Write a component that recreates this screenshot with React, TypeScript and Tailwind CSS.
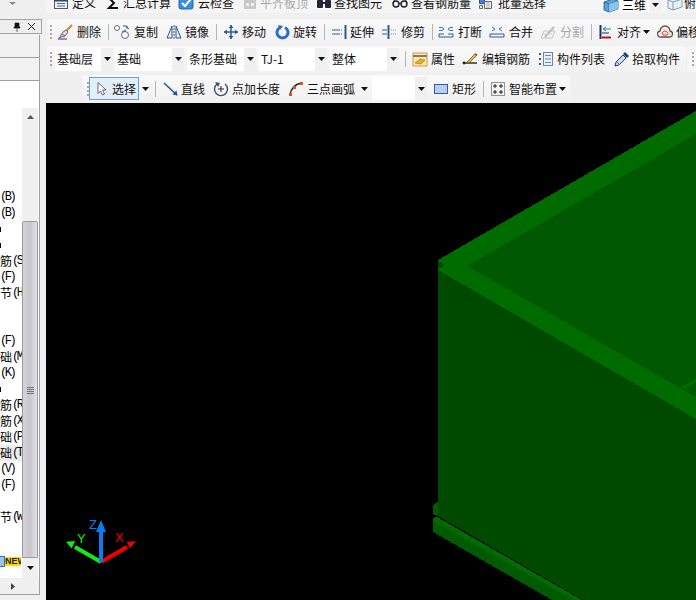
import type { ReactNode } from 'react';

const cjk = { fontFamily: '"Noto Sans CJK SC", "Liberation Sans", sans-serif' };

function Icon({ children, w = 16 }: { children: ReactNode; w?: number }) {
  return (
    <svg width={w} height="16" viewBox={`0 0 ${w} 16`} fill="none" className="shrink-0 block">
      {children}
    </svg>
  );
}

const icons: Record<string, ReactNode> = {
  define: (
    <Icon>
      <rect x="1.5" y="2.5" width="13" height="11" fill="#eef2f8" stroke="#4a5a70" />
      <path d="M1 5.5h14" stroke="#30466a" strokeWidth="2" />
      <path d="M4 8.5h8M4 11h8" stroke="#667" />
    </Icon>
  ),
  sigma: (
    <Icon>
      <path d="M12 3H3l5 5-5 5h9" stroke="#111" strokeWidth="2" />
    </Icon>
  ),
  cloud: (
    <Icon>
      <rect x="1" y="2" width="14" height="12" rx="2" fill="#3b8fd8" stroke="#1b6ab0" />
      <path d="M4 8l3 3 6-7" stroke="#fff" strokeWidth="2" />
    </Icon>
  ),
  flush: (
    <Icon>
      <path d="M2 5h12v9H2z" fill="#c8c8c8" />
      <path d="M4 2h8v3H4z" fill="#dedede" />
      <path d="M4 8h3v3H4zM9 8h3v3H9z" fill="#f0f0f0" />
    </Icon>
  ),
  find: (
    <Icon>
      <rect x="1" y="5" width="6" height="8" rx="1" fill="#223" />
      <rect x="9" y="5" width="6" height="8" rx="1" fill="#223" />
      <path d="M3 2h3v3H3zM10 2h3v3h-3z" fill="#446" />
      <path d="M7 8h2" stroke="#223" strokeWidth="2" />
    </Icon>
  ),
  glasses: (
    <Icon>
      <circle cx="4" cy="9" r="3" stroke="#222" strokeWidth="1.4" fill="#eef" />
      <circle cx="12" cy="9" r="3" stroke="#222" strokeWidth="1.4" fill="#eef" />
      <path d="M7 8.5h2M1 8l2-4M15 8l-2-4" stroke="#222" />
    </Icon>
  ),
  batch: (
    <Icon>
      <path d="M1.5 3.5h5v5h-5z" fill="#4f7fd0" stroke="#2a4f90" />
      <path d="M6.5 6.5h7v7h-7zM1.5 10.5h3v3h-3z" fill="#f4f4f8" stroke="#666" />
      <path d="M8 8h4M8 10h4M8 12h4" stroke="#aab" />
    </Icon>
  ),
  box: (
    <Icon>
      <path d="M1 5l9-3 5 2v8l-9 3-5-2z" fill="#5ea3d6" stroke="#2d6fa5" />
      <path d="M6 7l9-3M6 7v8M6 7L1 5" stroke="#2d6fa5" />
      <path d="M6 7l9-3v8l-9 3z" fill="#8fc4e8" />
    </Icon>
  ),
  top: (
    <Icon>
      <path d="M1 5l9-3 5 2v8l-9 3-5-2z" fill="#e8f0f4" stroke="#7fa0b0" />
      <path d="M6 7l9-3M6 7v8M6 7L1 5" stroke="#7fa0b0" />
    </Icon>
  ),
  erase: (
    <Icon>
      <path d="M15 1L8 8" stroke="#c98a2a" strokeWidth="2" />
      <path d="M9 6l2 2-3 4-4 1-2 1c2-2 2-4 4-6z" fill="#e8e4f0" stroke="#5a5a80" />
      <path d="M1 15h9" stroke="#303060" />
      <path d="M5 10l3 2" stroke="#d03030" />
    </Icon>
  ),
  copy: (
    <Icon w={18}>
      <circle cx="4" cy="4" r="2.5" stroke="#667" fill="#fff" />
      <circle cx="12" cy="11" r="3.5" stroke="#667" fill="#fff" />
      <path d="M9 8l4-2M13 2l3 3" stroke="#2a5aa8" />
      <path d="M10 2h4v3" stroke="#2a5aa8" />
    </Icon>
  ),
  mirror: (
    <Icon>
      <path d="M6 2v12H1z" fill="#e8eef8" stroke="#33508a" />
      <path d="M10 2v12h5z" fill="#e8eef8" stroke="#33508a" />
      <path d="M8 1v14" stroke="#33508a" strokeDasharray="2 1" />
    </Icon>
  ),
  move: (
    <Icon>
      <path d="M8 1v14M1 8h14" stroke="#2c5a96" strokeWidth="1.5" />
      <path d="M8 1l-2.5 3h5zM8 15l-2.5-3h5zM1 8l3-2.5v5zM15 8l-3-2.5v5z" fill="#2c5a96" />
    </Icon>
  ),
  rotate: (
    <Icon>
      <path d="M5 3.5a5.5 5.5 0 1 0 5 0" stroke="#2a6ccc" strokeWidth="3" />
      <path d="M3 1l5 1-3 4z" fill="#2a6ccc" />
    </Icon>
  ),
  extend: (
    <Icon>
      <path d="M1 6h8M1 10h8" stroke="#2c5a96" />
      <path d="M10 6h1M12 6h0M10 10h1" stroke="#2c5a96" strokeDasharray="1 1" />
      <path d="M14.5 1v14" stroke="#2c5a96" strokeWidth="2" />
    </Icon>
  ),
  trim: (
    <Icon>
      <path d="M0 6h5M0 10h5" stroke="#2c5a96" />
      <path d="M9 6h5M9 10h5" stroke="#889" strokeDasharray="1 1" />
      <path d="M6.5 1v14" stroke="#2c5a96" strokeWidth="2" />
    </Icon>
  ),
  split: (
    <Icon>
      <path d="M1 10h5M10 10h5M1 13h14" stroke="#2c5a96" />
      <path d="M1 3.5h3l2 1.5-2 1.5H1M15 3.5h-3l-2 1.5 2 1.5h3" stroke="#2c7ad0" />
      <path d="M1 10v3M15 10v3" stroke="#2c5a96" />
    </Icon>
  ),
  merge: (
    <Icon>
      <path d="M1 10h14M1 13h14M1 10v3M15 10v3" stroke="#2c5a96" />
      <path d="M3 3l3 2-3 2M13 3l-3 2 3 2" stroke="#2c7ad0" />
    </Icon>
  ),
  cut: (
    <Icon>
      <path d="M1 14l3-7h11l-3 7z" stroke="#c4c4c4" />
      <path d="M5 13l9-10" stroke="#bcbcbc" strokeWidth="2" />
      <path d="M2 10h10" stroke="#d4d4d4" />
    </Icon>
  ),
  align: (
    <Icon>
      <path d="M2.5 1v14" stroke="#1b2f6b" strokeWidth="2" />
      <path d="M4 13.5h9" stroke="#b01818" strokeWidth="2" />
      <path d="M5 5h8M5 5l3-2M5 5l3 2" stroke="#2c7ad0" />
      <path d="M4 9h7" stroke="#1b2f6b" />
    </Icon>
  ),
  offset: (
    <Icon>
      <path d="M4 13a3 3 0 0 1-1-6 5 5 0 0 1 10 0 3 3 0 0 1-1 6z" stroke="#555" strokeWidth="1.3" fill="#f8e8e0" />
      <path d="M6 11a2 2 0 0 1 0-3 2.500 2.500 0 0 1 4 0 2 2 0 0 1 0 3z" stroke="#d84030" />
    </Icon>
  ),
  attr: (
    <Icon>
      <rect x="1" y="2" width="14" height="13" fill="#f6e6b8" stroke="#d89a4a" />
      <path d="M1 5h14" stroke="#8a7a60" strokeWidth="2" />
      <path d="M3 12l5-4 5 1-4 4z" fill="#e0b020" stroke="#a07810" strokeWidth="0.6" />
    </Icon>
  ),
  rebar: (
    <Icon>
      <path d="M1 12h14" stroke="#222" strokeWidth="1.4" />
      <path d="M5 11l8-8 2 1-8 8z" fill="#e8c040" stroke="#604010" strokeWidth="0.7" />
      <path d="M13 3l2 1" stroke="#d03030" strokeWidth="1.5" />
      <circle cx="2" cy="12" r="1.400" fill="#222" />
    </Icon>
  ),
  list: (
    <Icon>
      <path d="M1 2h2v2H1zM1 7h2v2H1zM1 12h2v2H1z" fill="#556" />
      <rect x="5.500" y="1.500" width="9" height="13" fill="#eaf2fb" stroke="#6a87a8" />
      <path d="M7 4.500h6M7 8h6M7 11.500h6" stroke="#6a87a8" />
    </Icon>
  ),
  pick: (
    <Icon>
      <path d="M1 15l1-4 7-7 3 3-7 7z" fill="#c8def4" stroke="#1d3f7a" />
      <path d="M9 3l2-2 4 4-2 2z" fill="#1d3f7a" />
      <path d="M3 11l3 3" stroke="#d03030" />
    </Icon>
  ),
  cursor: (
    <Icon>
      <path d="M3 1.500v11l2.500-2.500 2 4 2-1-2-4H11z" fill="#fff" stroke="#667" />
    </Icon>
  ),
  line: (
    <Icon>
      <path d="M1 2l13 12" stroke="#23528f" strokeWidth="1.5" />
      <path d="M14.500 14.500l-1-5-4 4z" fill="#23528f" />
    </Icon>
  ),
  lengthen: (
    <Icon>
      <path d="M4 3a6.500 6.500 0 1 0 8 0" stroke="#3a4a70" strokeWidth="1.400" />
      <path d="M2 1l5 1-2 4z" fill="#3a4a70" />
      <path d="M8 5v6M5 8h6" stroke="#222" />
    </Icon>
  ),
  arc: (
    <Icon>
      <path d="M2 14C3 7 7 3 14 2" stroke="#222" strokeWidth="1.300" />
      <rect x="1" y="12" width="3" height="3" fill="#d85030" />
      <rect x="5" y="5" width="3" height="3" fill="#d85030" />
      <rect x="12" y="1" width="3" height="3" fill="#d85030" />
    </Icon>
  ),
  rect: (
    <Icon>
      <rect x="1.500" y="3.500" width="13" height="9" fill="#b8cef0" stroke="#3858a8" />
    </Icon>
  ),
  smart: (
    <Icon>
      <rect x="1.500" y="1.500" width="13" height="13" fill="#f4f4f4" stroke="#333" strokeDasharray="1 1" />
      <path d="M5 3v4M3 5h4M11 3v4M9 5h4M5 9v4M3 11h4M11 9v4M9 11h4" stroke="#222" />
    </Icon>
  ),
};

function Caret({ className = '' }: { className?: string }) {
  return (
    <svg width="7" height="4" viewBox="0 0 7 4" className={`shrink-0 block ${className}`}>
      <path d="M0 0h7L3.500 4z" fill="#111" />
    </svg>
  );
}

function Tool({
  icon,
  label,
  width,
  slot = 'w-[20px]',
  muted,
  children,
}: {
  icon: string;
  label: string;
  width: string;
  slot?: string;
  muted?: boolean;
  children?: ReactNode;
}) {
  return (
    <div className={`flex items-center shrink-0 ${width}`}>
      <span className={`shrink-0 ${slot}`}>{icons[icon]}</span>
      <span className={`whitespace-nowrap ${muted ? 'text-[#a8a8a8]' : 'text-[#111]'}`}>{label}</span>
      {children}
    </div>
  );
}

function Sep({ width }: { width: string }) {
  return (
    <div className={`h-[16px] shrink-0 ${width}`}>
      <div className="w-px h-full bg-[#b4b4b4]" />
    </div>
  );
}

function Grip({ className = '' }: { className?: string }) {
  return (
    <div className={`flex flex-col gap-[2px] shrink-0 ${className}`}>
      <i className="block w-[2px] h-[2px] bg-[#a8a8a8]" />
      <i className="block w-[2px] h-[2px] bg-[#a8a8a8]" />
      <i className="block w-[2px] h-[2px] bg-[#a8a8a8]" />
      <i className="block w-[2px] h-[2px] bg-[#a8a8a8]" />
    </div>
  );
}

function Combo({ label, width, gap = 'mr-[3px]' }: { label: string; width: string; gap?: string }) {
  return (
    <div className={`h-[23px] bg-white flex items-center justify-between shrink-0 pl-[2px] ${width} ${gap}`}>
      <span className="whitespace-nowrap text-[#111]">{label}</span>
      <span className="w-[12px] h-full bg-[#f0f0f0] flex items-center justify-center">
        <Caret />
      </span>
    </div>
  );
}

type TreeRow = { zh?: string; en?: string; bar?: boolean; active?: boolean };

const treeRows: TreeRow[] = [
  {}, {}, {}, {}, {},
  { en: '(B)' },
  { en: '(B)' },
  { bar: true },
  { bar: true },
  { zh: '筋', en: '(S' },
  { en: '(F)' },
  { zh: '节', en: '(H' },
  {}, {},
  { en: '(F)' },
  { zh: '础', en: '(M' },
  { en: '(K)' },
  { bar: true },
  { zh: '筋', en: '(R' },
  { zh: '筋', en: '(X' },
  { zh: '础', en: '(P' },
  { zh: '础', en: '(T', active: true },
  { en: '(V)' },
  { en: '(F)' },
  {},
  { zh: '节', en: '(W' },
  {}, {},
];

function TreeLine({ row }: { row: TreeRow }) {
  return (
    <div className={`h-4 flex items-center overflow-hidden whitespace-nowrap text-[12px] text-black ${row.active ? 'bg-[#ececec]' : ''}`}>
      {row.bar && <i className="block w-px h-[5px] bg-black" />}
      {row.zh && <span className="w-[12px] shrink-0">{row.zh}</span>}
      {row.en && (
        <span className="tracking-[-2.400px] text-[12px]" style={{ fontFamily: '"Liberation Mono", monospace' }}>
          {row.en}
        </span>
      )}
    </div>
  );
}

function SidePanel() {
  return (
    <aside className="w-[46px] shrink-0 h-full flex flex-col bg-[#f0f0f0]">
      <div className="h-[19px] shrink-0 flex justify-center pr-[22px] pt-[2px]">
        <svg width="7" height="3" viewBox="0 0 7 3" className="block">
          <path d="M0 0h7L3.500 3z" fill="#8a8a8a" />
        </svg>
      </div>
      <div className="h-[15px] w-[42px] shrink-0 flex items-center justify-end gap-[6px] pr-[5px] bg-[#eeeeee] border border-[#a4a4a4] border-l-0">
        <svg width="8" height="10" viewBox="0 0 8 10" className="block">
          <path d="M2 1h4v4h1v1H1V5h1zM4 6v4" stroke="#111" fill="#111" strokeWidth="0.6" />
        </svg>
        <svg width="9" height="9" viewBox="0 0 9 9" className="block">
          <path d="M1 1l7 7M8 1L1 8" stroke="#222" />
        </svg>
      </div>
      <div className="w-[40px] h-[23px] mt-[1px] shrink-0 border-r border-b border-[#a0a0a0] bg-[#f2f2f2]" />
      <div className="w-[40px] h-[23px] shrink-0 border-r border-b border-[#a0a0a0] bg-[#f2f2f2]" />
      <div className="w-[40px] h-[27px] shrink-0 border-r border-[#a0a0a0] bg-white" />
      <div className="w-[40px] flex-1 min-h-0 flex flex-col border-r border-b border-[#a0a0a0] bg-white">
        <div className="flex flex-1 min-h-0">
          <div className="w-[22px] shrink-0 pt-px overflow-hidden" style={cjk}>
            {treeRows.map((row, i) => (
              <TreeLine key={i} row={row} />
            ))}
            <div className="h-4 flex items-start">
              <span className="w-[5px] h-[11px] mt-[-1px] bg-[#9cc4ea] border border-[#3a70b0] border-l-0 shrink-0" />
              <span className="w-[16px] h-[9px] bg-[#ffd800] text-[9px] leading-[9px] font-bold text-[#222] overflow-hidden" style={{ fontFamily: '"Liberation Sans", sans-serif' }}>
                NEW
              </span>
            </div>
          </div>
          <div className="w-[16px] shrink-0 flex flex-col bg-[#f0f0f0]">
            <div className="h-[18px] flex items-center justify-center shrink-0">
              <svg width="7" height="4" viewBox="0 0 7 4" className="block">
                <path d="M0 4h7L3.500 0z" fill="#555" />
              </svg>
            </div>
            <div className="h-[95px] shrink-0" />
            <div className="h-[337px] shrink-0 rounded-t-[2px] border border-[#9a9a9a] bg-gradient-to-r from-[#d4d4da] via-[#c6c6cc] to-[#e2e2e6] flex items-center justify-center">
              <div className="flex flex-col gap-px mt-[2px]">
                <i className="block w-[7px] h-px bg-[#777]" />
                <i className="block w-[7px] h-px bg-[#777]" />
                <i className="block w-[7px] h-px bg-[#777]" />
                <i className="block w-[7px] h-px bg-[#777]" />
              </div>
            </div>
            <div className="h-[20px] flex items-center justify-center shrink-0">
              <Caret />
            </div>
          </div>
        </div>
        <div className="h-[16px] shrink-0 bg-[#f0f0f0] flex items-center pl-[11px]">
          <svg width="4" height="7" viewBox="0 0 4 7" className="block">
            <path d="M0 0v7l4-3.500z" fill="#444" />
          </svg>
        </div>
      </div>
      <div className="h-[5px] shrink-0" />
    </aside>
  );
}

function Toolbars() {
  return (
    <div className="shrink-0 text-[12px] leading-none" style={cjk}>
      <div className="h-[13px] flex items-end overflow-hidden pl-[7px] pb-[2px] bg-[#f5f5f5]">
        <Tool icon="define" label="定义" width="w-[53px]" slot="w-[19px]" />
        <Tool icon="sigma" label="汇总计算" width="w-[72px]" slot="w-[17px]" />
        <Tool icon="cloud" label="云检查" width="w-[64px]" />
        <Tool icon="flush" label="平齐板顶" width="w-[74px]" slot="w-[18px]" muted />
        <Tool icon="find" label="查找图元" width="w-[76px]" slot="w-[18px]" />
        <Tool icon="glasses" label="查看钢筋量" width="w-[86px]" slot="w-[19px]" />
        <Tool icon="batch" label="批量选择" width="w-[122px]" />
        <div className="w-[61px] h-[12px] bg-white flex items-center justify-between shrink-0 pl-[3px]">
          <span className="flex items-center gap-[2px]">
            {icons.box}
            <span className="whitespace-nowrap ml-px">三维</span>
          </span>
          <span className="w-[12px] h-full bg-[#f0f0f0] flex items-center justify-center">
            <Caret />
          </span>
        </div>
        <div className="w-[6px] shrink-0" />
        <Tool icon="top" label="俯视" width="w-[50px]" slot="w-[17px]" />
      </div>

      <div className="h-[6px] bg-[#f0f0f0]" />

      <div className="h-[26px] ml-px flex items-center overflow-hidden rounded-l-[3px] bg-gradient-to-b from-[#f9f9f9] to-[#f1f1f1]">
        <Grip className="ml-[3px] mr-[5px]" />
        <Tool icon="erase" label="删除" width="w-[51px]" />
        <Sep width="w-[5px]" />
        <Tool icon="copy" label="复制" width="w-[53px]" slot="w-[21px]" />
        <Tool icon="mirror" label="镜像" width="w-[50px]" slot="w-[19px]" />
        <Sep width="w-[7px]" />
        <Tool icon="move" label="移动" width="w-[52px]" slot="w-[19px]" />
        <Tool icon="rotate" label="旋转" width="w-[49px]" slot="w-[18px]" />
        <Sep width="w-[7px]" />
        <Tool icon="extend" label="延伸" width="w-[51px]" slot="w-[19px]" />
        <Tool icon="trim" label="修剪" width="w-[50px]" slot="w-[19px]" />
        <Sep width="w-[6px]" />
        <Tool icon="split" label="打断" width="w-[51px]" />
        <Tool icon="merge" label="合并" width="w-[51px]" />
        <Tool icon="cut" label="分割" width="w-[51px]" muted />
        <Sep width="w-[7px]" />
        <Tool icon="align" label="对齐" width="w-[59px]" slot="w-[19px]">
          <Caret className="ml-[2px]" />
        </Tool>
        <Tool icon="offset" label="偏移" width="w-[50px]" slot="w-[19px]" />
      </div>

      <div className="h-px bg-[#f0f0f0]" />

      <div className="h-[26px] ml-px flex items-center overflow-hidden bg-[#f0f0f0]">
        <div className="h-full w-[639px] flex items-center rounded-[3px] bg-gradient-to-b from-[#f9f9f9] to-[#f1f1f1] shrink-0">
          <Grip className="ml-[3px] mr-[3px]" />
          <Combo label="基础层" width="w-[58px]" gap="mr-[2px]" />
          <Combo label="基础" width="w-[69px]" />
          <Combo label="条形基础" width="w-[69px]" />
          <Combo label="TJ-1" width="w-[68px]" gap="mr-[3px]" />
          <Combo label="整体" width="w-[69px]" gap="mr-[6px]" />
          <Sep width="w-[7px]" />
          <Tool icon="attr" label="属性" width="w-[50px]" slot="w-[19px]" />
          <Tool icon="rebar" label="编辑钢筋" width="w-[76px]" />
          <Tool icon="list" label="构件列表" width="w-[76px]" slot="w-[19px]" />
          <Tool icon="pick" label="拾取构件" width="w-[66px]" slot="w-[18px]" />
        </div>
        <div className="h-full flex-1 ml-px rounded-l-[3px] bg-[#f6f6f6] flex items-center pl-[5px]">
          <Grip />
        </div>
      </div>

      <div className="h-[3px] bg-[#f0f0f0]" />

      <div className="h-[27px] flex items-center bg-[#f0f0f0] pl-[36px]">
        <div className="h-full w-[488px] flex items-center rounded-[3px] bg-gradient-to-b from-[#f9f9f9] to-[#f1f1f1]">
          <Grip className="ml-[5px]" />
          <div className="ml-[0px] w-[50px] h-[23px] flex items-center pl-[5px] bg-[#e2eefa] border border-[#6aa0d8] shrink-0">
            <span className="w-[17px] shrink-0">{icons.cursor}</span>
            <span className="whitespace-nowrap text-[#111]">选择</span>
          </div>
          <Caret className="ml-[3px] mr-[6px]" />
          <Sep width="w-[8px]" />
          <Tool icon="line" label="直线" width="w-[50px]" slot="w-[18px]" />
          <Tool icon="lengthen" label="点加长度" width="w-[75px]" slot="w-[19px]" />
          <Tool icon="arc" label="三点画弧" width="w-[84px]" slot="w-[19px]">
            <Caret className="ml-[6px]" />
          </Tool>
          <div className="w-[55px] h-[23px] bg-white flex justify-end shrink-0 mr-[6px]">
            <span className="w-[12px] h-full bg-[#f0f0f0] flex items-center justify-center">
              <Caret />
            </span>
          </div>
          <Tool icon="rect" label="矩形" width="w-[50px]" slot="w-[19px]" />
          <Sep width="w-[7px]" />
          <Tool icon="smart" label="智能布置" width="w-[72px]" slot="w-[19px]">
            <Caret className="ml-[2px]" />
          </Tool>
        </div>
      </div>
      <div className="h-px bg-[#f0f0f0]" />
    </div>
  );
}

function Viewport() {
  return (
    <div className="flex-1 min-h-0 bg-black overflow-hidden">
      <svg width="650" height="497" viewBox="46 103 650 497" className="block" shapeRendering="crispEdges">
        {/* foot of the strip footing */}
        <path d="M433 518L580 600H552L433 532Z" fill="#005a00" />
        <path d="M433 518l4-1L582 600h-8L433 521Z" fill="#006b00" />
        <path d="M433 505l5-3v14l-5-2Z" fill="#005a00" />
        {/* side wall */}
        <path d="M438 262V516L583 600H696V262Z" fill="#004a00" />
        {/* top face */}
        <path d="M438 260L696 111V419L438 270Z" fill="#005800" />
        <path d="M438 260L696 111V134L467 266L696 397V419L438 270Z" fill="#006c00" />
        <path d="M438 261l7 4-7 4Z" fill="#004a00" />
        <path d="M680 388l16-9v3l-11 7Z" fill="#006c00" />
        {/* axis triad */}
        <g shapeRendering="auto">
          <path d="M101 562L75 547" stroke="#19e619" strokeWidth="4" />
          <path d="M66 541.700L75 541L71.700 548.500Z" fill="#19e619" />
          <path d="M101 562L127 547" stroke="#f00000" strokeWidth="4" />
          <path d="M136 541.300L126.700 541.700L130 548.300Z" fill="#f00000" />
          <path d="M101 562V530" stroke="#0a7cf0" strokeWidth="4" />
          <path d="M101 520l-5 12h10Z" fill="#0a7cf0" />
          <text x="89" y="529" fill="#0a7cf0" fontSize="13" fontFamily="Liberation Sans, sans-serif">Z</text>
          <text x="77" y="543" fill="#19e619" fontSize="13" fontFamily="Liberation Sans, sans-serif">Y</text>
          <text x="115" y="542" fill="#f00000" fontSize="13" fontFamily="Liberation Sans, sans-serif">X</text>
        </g>
      </svg>
    </div>
  );
}

export default function App() {
  return (
    <div className="w-[696px] h-[600px] flex overflow-hidden bg-[#f0f0f0]">
      <SidePanel />
      <main className="flex-1 min-w-0 h-full flex flex-col">
        <Toolbars />
        <Viewport />
      </main>
    </div>
  );
}
